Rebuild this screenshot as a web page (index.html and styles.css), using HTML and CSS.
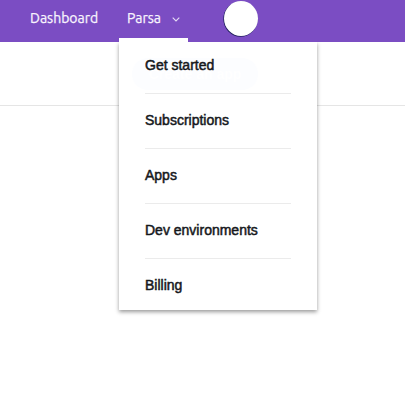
FILE: index.html
```html
<!DOCTYPE html>
<html lang="en">
<head>
<meta charset="utf-8">
<title>Dashboard</title>
<link rel="stylesheet" href="styles.css">
</head>
<body>
<header class="topbar">
  <a class="nav-link">Dashboard</a>
  <div class="account">
    <span class="account-name">Parsa</span>
    <svg class="chevron" width="8" height="5" viewBox="0 0 8 5"><path d="M.7.7 4 4 7.3.7" fill="none" stroke="#e6dcf5" stroke-width="1.1"/></svg>
    <nav class="menu">
      <a class="menu-item">Get started</a>
      <a class="menu-item">Subscriptions</a>
      <a class="menu-item">Apps</a>
      <a class="menu-item">Dev environments</a>
      <a class="menu-item">Billing</a>
    </nav>
  </div>
  <div class="avatar"></div>
</header>
<div class="toolbar"></div>
</body>
</html>
```
FILE: styles.css
```css
* { box-sizing: border-box; }
body {
  margin: 0;
  height: 416px;
  overflow: hidden;
  background: #fff;
  font-family: "Liberation Sans", Arial, sans-serif;
}
.topbar {
  display: flex;
  height: 42px;
  background: #7b4dc3;
  color: #f8f4fd;
  font: 14px/20px Ubuntu, "Noto Sans", "Open Sans", sans-serif;
  -webkit-text-stroke: .25px #f8f4fd;
}
.nav-link {
  width: 89px;
  margin-left: 30px;
  padding-top: 8px;
}
.account {
  position: relative;
  display: flex;
  width: 69px;
  padding: 8px 0 0 8px;
  border-bottom: 4px solid #fff;
}
.account-name { width: 45px; }
.chevron { margin-top: 9px; }
.avatar {
  width: 34px;
  height: 35px;
  margin: 1px 0 0 36px;
  border-radius: 50%;
  background: #fff;
  box-shadow: -0.5px 0.6px 0 0.2px #20205c;
}
.toolbar {
  height: 64px;
  border-bottom: 1px solid #e5e5e5;
}
.menu {
  position: absolute;
  z-index: 2;
  top: 42px;
  left: 0;
  width: 198px;
  height: 268px;
  padding: 0 26px;
  background: #fff;
  box-shadow: 0 2px 4px rgba(0, 0, 0, .4);
  clip-path: inset(0 -8px -8px -8px);
  color: #16181c;
  font: 14px/20px "Liberation Sans", Arial, sans-serif;
  -webkit-text-stroke: .5px #16181c;
}
/* Faint call-to-action pill showing through the menu */
.menu::before {
  content: "Create an app";
  position: absolute;
  z-index: -1;
  top: 16px;
  left: 13px;
  width: 126px;
  height: 32px;
  border-radius: 16px;
  background: #fcfdff;
  color: #fff;
  font-weight: bold;
  line-height: 32px;
  text-align: center;
  -webkit-text-stroke: 0;
}
.menu-item {
  display: block;
  height: 55px;
  padding-top: 16px;
  border-bottom: 1px solid #ebebeb;
}
.menu-item:first-child { height: 52px; padding-top: 13px; }
.menu-item:last-child { height: 51px; border: 0; }
```
